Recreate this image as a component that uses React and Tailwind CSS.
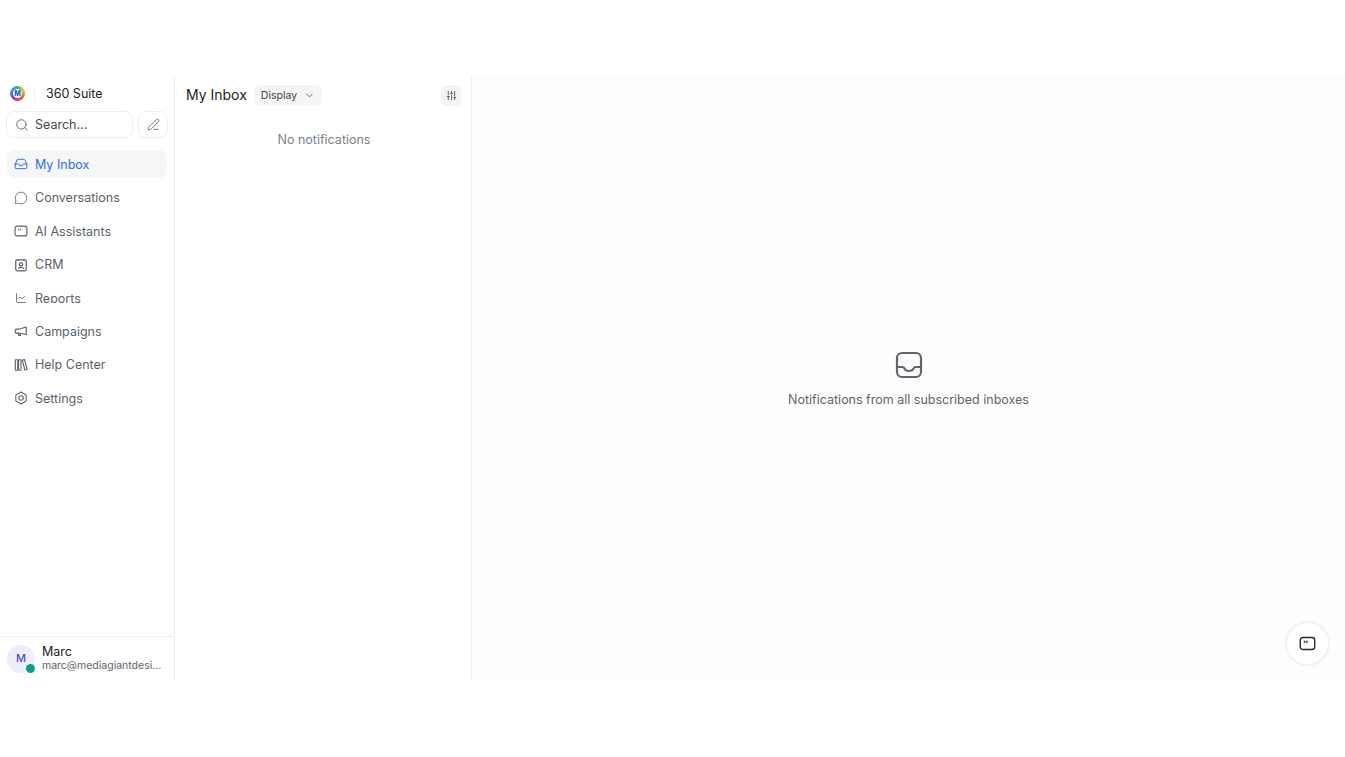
import React from 'react';
import { Search, PenLine, Inbox, MessageCircle, ChartLine, ChevronDown, SlidersVertical } from 'lucide-react';

function BotIcon({ className }) {
    return (
        <svg viewBox="0 0 16 16" fill="none" stroke="currentColor" strokeWidth="1.3" className={className}>
            <rect x="1.2" y="2.4" width="13.6" height="11.2" rx="2.6" />
            <path d="M5.2 5.4v1.8M7.4 5.4v1.8" strokeWidth="1.4" />
        </svg>
    );
}

function CrmIcon({ className }) {
    return (
        <svg viewBox="0 0 16 16" fill="none" stroke="currentColor" strokeWidth="1.4" className={className}>
            <rect x="2" y="2.2" width="12" height="12.4" rx="1.6" />
            <path d="M5 1v2M11 1v2" />
            <circle cx="8" cy="7.2" r="1.9" />
            <path d="M4.8 12.4c.6-1.200 1.800-1.700 3.200-1.700s2.600.5 3.200 1.700" />
        </svg>
    );
}

function MegaphoneIcon({ className }) {
    return (
        <svg viewBox="0 0 16 16" fill="none" stroke="currentColor" strokeWidth="1.3" strokeLinejoin="round" className={className}>
            <path d="M14 3.500v8.500l-7.500-1.500H3c-1 0-1.700-.7-1.700-1.700V7.500c0-1 .7-1.700 1.700-1.700h3.500z" />
            <path d="M4.500 10.500l.8 2.500h2.200l-.5-2" />
        </svg>
    );
}

function BooksIcon({ className }) {
    return (
        <svg viewBox="0 0 16 16" fill="none" stroke="currentColor" strokeWidth="1.3" strokeLinejoin="round" className={className}>
            <rect x="1.500" y="2" width="2.800" height="12" rx=".5" />
            <rect x="5.200" y="2" width="2.800" height="12" rx=".5" />
            <path d="M9.500 2.400l2.500-.7 2.900 11.400-2.500.7z" />
        </svg>
    );
}

function SettingsIcon({ className }) {
    return (
        <svg viewBox="0 0 16 16" fill="none" stroke="currentColor" strokeWidth="1.2" className={className}>
            <path d="M8 1.200l5.900 3.400v6.800L8 14.800l-5.900-3.400V4.600z" strokeLinejoin="round" />
            <circle cx="8" cy="8" r="2.600" />
        </svg>
    );
}

function InboxTray({ className }) {
    return (
        <svg viewBox="0 0 28 28" fill="none" stroke="currentColor" strokeWidth="2.2" strokeLinejoin="round" className={className}>
            <rect x="2" y="2" width="24" height="24" rx="5" />
            <path d="M2 16h5.500c1 0 1.500.6 2 1.600.6 1.400 1.600 2.400 4.500 2.400s3.900-1 4.500-2.400c.5-1 1-1.600 2-1.600H26" />
        </svg>
    );
}

function Logo() {
    return (
        <div className="w-[15px] h-[15px] -mt-[1px] rounded-full flex items-center justify-center bg-[conic-gradient(#38b56a,#e8c52f,#ef6a2f,#e0357a,#7a4ae0,#2f9be8,#38b56a)]">
            <div className="w-[9px] h-[9px] rounded-full bg-white flex items-center justify-center text-[7px] leading-none font-extrabold text-[#1f5fbf]">M</div>
        </div>
    );
}

const navItems = [
    { label: 'Conversations', icon: MessageCircle },
    { label: 'AI Assistants', icon: BotIcon },
    { label: 'CRM', icon: CrmIcon },
    { label: 'Reports', icon: ChartLine, clipped: true },
    { label: 'Campaigns', icon: MegaphoneIcon },
    { label: 'Help Center', icon: BooksIcon },
    { label: 'Settings', icon: SettingsIcon },
];

export default function App() {
    return (
        <div className="h-[757px] bg-white pt-[76px] font-['Inter',sans-serif] overflow-hidden">
            <div className="h-[605px] flex">
                <aside className="w-[175px] border-r border-[#eeeeee] flex flex-col">
                    <div className="flex items-center h-[34px] pl-[10px] pt-[2px]">
                        <Logo />
                        <div className="w-px h-[14px] bg-[#f0f0f0] ml-[9px]" />
                        <span className="ml-[11px] text-[12.5px] text-[#1c1c1c] font-normal">360 Suite</span>
                    </div>
                    <div className="flex gap-[5px] pl-[6px] pr-[6px] mt-[1px]">
                        <div className="w-[127px] h-[27px] rounded-[8px] border border-[#eeeeee] flex items-center pl-[8px] gap-[6px] text-[12.5px] font-normal text-[#3f4650]">
                            <Search size={14} strokeWidth={1.6} className="text-[#60646c]" />
                            <span className="pt-[2px]">Search...</span>
                        </div>
                        <div className="w-[30px] h-[27px] rounded-[8px] border border-[#eeeeee] flex items-center justify-center">
                            <PenLine size={13} strokeWidth={1.5} className="text-[#60646c]" />
                        </div>
                    </div>
                    <nav className="flex flex-col mt-[12px] pl-[7px] pr-[7px]">
                        <div className="h-[28px] rounded-[8px] bg-[#f6f6f6] flex items-center pl-[7px] gap-[7px] text-[12.5px] font-normal text-[#2f6fdb] mb-[3px]">
                            <Inbox size={14} strokeWidth={1.7} />
                            <span className="pt-[2px]">My Inbox</span>
                        </div>
                        {navItems.map((item) => {
                            const Icon = item.icon;
                            if (item.clipped) {
                                return (
                                    <div key={item.label} className="h-[33px]">
                                        <div className="h-[21.5px] overflow-hidden flex items-start pt-[8px] pl-[7px] text-[12.5px] text-[#5b616b]">
                                            <Icon size={12} strokeWidth={1.6} className="w-[12px] h-[12px] mt-[2px] ml-[1px] mr-[8px]" />
                                            <span>{item.label}</span>
                                        </div>
                                    </div>
                                );
                            }
                            return (
                                <div key={item.label} className="h-[33.5px] flex items-center pl-[7px] gap-[7px] text-[12.5px] text-[#5b616b]">
                                    <Icon size={14} strokeWidth={1.4} className="w-[14px] h-[14px]" />
                                    <span className="pt-[2px]">{item.label}</span>
                                </div>
                            );
                        })}
                    </nav>
                    <div className="mt-auto h-[45px] border-t border-[#eeeeee] flex items-center pl-[7px] gap-[7px]">
                        <div className="relative w-[28px] h-[28px] -mt-[1px] rounded-full bg-[#ededfb] flex items-center justify-center text-[11px] font-medium text-[#4f4fb8]">
                            M
                            <span className="absolute right-0 bottom-0 w-[9px] h-[9px] rounded-full bg-[#129e86]" />
                        </div>
                        <div className="flex flex-col leading-none -mt-[2px]">
                            <span className="text-[12.5px] leading-[15px] font-normal text-[#1c1c1c]">Marc</span>
                            <span className="text-[10.5px] leading-[14px] text-[#60646c] w-[120px] truncate">marc@mediagiantdesign.com</span>
                        </div>
                    </div>
                </aside>
                <section className="w-[297px] border-r border-[#eeeeee] flex flex-col">
                    <div className="flex items-center h-[38px] pl-[11px] pr-[10px]">
                        <span className="text-[14px] font-normal text-[#1c1c1c] -mt-[2px]">My Inbox</span>
                        <div className="ml-[7px] h-[21px] w-[68px] rounded-[7px] bg-[#f5f5f5] flex items-center pl-[7px] gap-[7px] text-[10.5px] font-normal text-[#3f3f46]">
                            <span className="pt-[2px]">Display</span>
                            <ChevronDown size={11} strokeWidth={1.6} />
                        </div>
                        <div className="ml-auto w-[20px] h-[21px] rounded-[6px] bg-[#f3f3f3] flex items-center justify-center">
                            <SlidersVertical size={11} strokeWidth={1.8} className="text-[#3f3f46]" />
                        </div>
                    </div>
                    <p className="mt-[17px] text-center text-[12.5px] font-normal text-[#7c7f87] pl-[2px]">No notifications</p>
                </section>
                <main className="relative flex-1 bg-[#fdfdfd] flex flex-col items-center justify-center">
                    <InboxTray className="w-[28px] h-[28px] text-[#60646c] mt-[3px]" />
                    <p className="mt-[12px] text-[12.5px] font-normal text-[#60646c]">Notifications from all subscribed inboxes</p>
                    <div className="absolute right-[15px] bottom-[15px] w-[45px] h-[45px] rounded-full bg-white border-2 border-[#f2f2f2] flex items-center justify-center">
                        <BotIcon className="w-[17px] h-[17px] text-[#27272a]" />
                    </div>
                </main>
            </div>
        </div>
    );
}
